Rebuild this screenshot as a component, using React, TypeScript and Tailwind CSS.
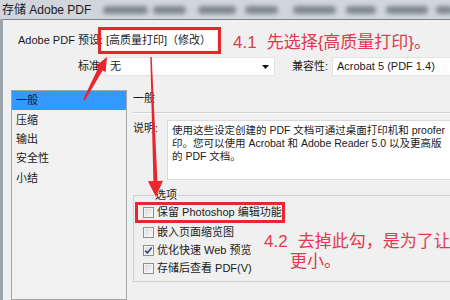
const blobs = [
  "ml-[12px] w-[45px]",
  "ml-[5px] w-[33px]",
  "ml-[12px] w-[38px]",
  "ml-[9px] w-[33px]",
  "ml-[15px] w-[43px]",
  "ml-[10px] w-[30px]",
  "ml-[10px] w-[42px]",
  "ml-[8px] w-[17px]"
];

const pages = ["一般", "压缩", "输出", "安全性", "小结"];

function Checkbox({ checked = false }: { checked?: boolean }) {
  return (
    <span className="flex h-[11px] w-[11px] shrink-0 items-center justify-center border border-[#8e8f8f] bg-gradient-to-br from-[#d9d9d9] to-[#fafafa] shadow-[inset_0_0_0_1px_#f4f4f4]">
      {checked && (
        <svg width="9" height="9" viewBox="0 0 9 9">
          <path d="M1.2 4.6 L3.4 7 L7.8 1.6" fill="none" stroke="#2f4a78" strokeWidth="1.6" />
        </svg>
      )}
    </span>
  );
}

function Option({ label, checked }: { label: string; checked?: boolean }) {
  return (
    <div className="flex h-[18px] items-center gap-[3px] pl-[9px]">
      <Checkbox checked={checked} />
      <span className="whitespace-nowrap">{label}</span>
    </div>
  );
}

function Arrows() {
  return (
    <svg className="pointer-events-none absolute inset-0" width="450" height="300" viewBox="0 0 450 300">
      <polygon
        fill="#e8262e"
        points="83.1,99.5 98.2,68.1 95.1,66.5 107,57 105.7,72.1 102.6,70.5 84.9,100.5"
      />
      <polygon
        fill="#e8262e"
        points="150.3,57 153.4,181 147.9,181.3 156,197 162.9,180.7 157.4,181 151.7,57"
      />
    </svg>
  );
}

export default function App() {
  return (
    <div className="relative h-[300px] w-[450px] overflow-hidden bg-gradient-to-b from-[#d0d6dc] to-[#bec5cc] font-['Liberation_Sans','Noto_Sans_CJK_SC',sans-serif] text-[11px] text-[#1a1a1a]">
      <div className="flex h-[19px] items-center">
        <span className="whitespace-nowrap pl-[2px] text-[12px] text-[#1b1b1b]">存储 Adobe PDF</span>
        {blobs.map((b, i) => (
          <span key={i} className={`h-[8px] shrink-0 rounded-full bg-[#6c757e] opacity-80 blur-[2px] ${b}`} />
        ))}
      </div>

      <div className="flex h-[281px]">
        <div className="w-[3px] shrink-0 bg-[#9ca3aa]" />
        <div className="flex flex-1 flex-col border-t border-[#7b848d] bg-[#f0f0f0]">
          {/* preset row */}
          <div className="flex items-center pt-[7px]">
            <span className="w-[95px] shrink-0 whitespace-nowrap pl-[15px]">Adobe PDF 预设:</span>
            <div className="h-[27px] w-[123px] shrink-0 border-[3px] border-[#e8262e] p-[1px]">
              <div className="flex h-full items-center bg-white pl-[4px] whitespace-nowrap">[高质量打印]（修改）</div>
            </div>
            <span className="ml-[12px] mt-[4px] flex whitespace-nowrap text-[17px] leading-none text-[#e3394e]">
              <span>4.1</span>
              <span className="ml-[10px]">先选择{"{"}高质量打印{"}"}。</span>
            </span>
          </div>

          {/* standard row */}
          <div className="mt-[3px] flex h-[19px] items-center">
            <span className="w-[102px] shrink-0 pr-[2px] text-right">标准:</span>
            <div className="flex h-full w-[170px] shrink-0 items-center justify-between border border-[#e2e2e2] bg-white pl-[4px] pr-[5px]">
              <span>无</span>
              <svg width="7" height="4" viewBox="0 0 7 4">
                <polygon points="0,0 7,0 3.5,4" fill="#111" />
              </svg>
            </div>
            <span className="ml-[17px] w-[40px] shrink-0 whitespace-nowrap">兼容性:</span>
            <div className="flex h-full w-[140px] shrink-0 items-center border border-[#e2e2e2] bg-white pl-[4px] whitespace-nowrap">
              Acrobat 5 (PDF 1.4)
            </div>
          </div>

          {/* body */}
          <div className="mt-[14px] flex flex-1 overflow-hidden">
            <div className="ml-[8px] w-[116px] shrink-0 border border-[#a5a5a5] bg-[#f1f1f1]">
              {pages.map((p, i) => (
                <div
                  key={p}
                  className={`flex h-[19.3px] items-center pl-[4px] ${i === 0 ? "bg-[#3399ff]" : ""}`}
                >
                  {p}
                </div>
              ))}
            </div>

            <div className="ml-[6px] flex flex-1 flex-col">
              <div className="h-[16px] leading-[16px]">一般</div>
              <div className="mt-[6px] h-[2px] border-t border-b border-t-[#cfcfcf] border-b-white" />

              <div className="mt-[6px] flex">
                <span className="w-[34px] shrink-0 pt-[2px] leading-[13px]">说明:</span>
                <div className="h-[60px] w-[300px] shrink-0 border border-[#dadada] bg-white pl-[4px] pt-[3px] text-[10.5px] leading-[13px]">
                  <div className="whitespace-nowrap">使用这些设定创建的 PDF 文档可通过桌面打印机和 proofer</div>
                  <div className="whitespace-nowrap">印。您可以使用 Acrobat 和 Adobe Reader 5.0 以及更高版</div>
                  <div className="whitespace-nowrap">的 PDF 文档。</div>
                </div>
              </div>

              <fieldset className="mt-[8px] w-[330px] shrink-0 border border-[#d0d0d0] pb-[4px]">
                <legend className="ml-[20px] px-[1px] leading-[14px]">选项</legend>
                <div className="ml-[1px] flex h-[21px] w-[150px] items-center gap-[3px] border-[3px] border-[#e8262e] pl-[5px]">
                  <Checkbox />
                  <span className="whitespace-nowrap">保留 Photoshop 编辑功能</span>
                </div>
                <Option label="嵌入页面缩览图" />
                <Option label="优化快速 Web 预览" checked />
                <Option label="存储后查看 PDF(V)" />
              </fieldset>
            </div>
          </div>
        </div>
      </div>

      {/* annotation over the options box */}
      <div className="absolute left-[264px] top-[232px] text-[17px] leading-[20px] text-[#e3394e]">
        <div className="flex whitespace-nowrap">
          <span>4.2</span>
          <span className="ml-[10px]">去掉此勾，是为了让</span>
        </div>
        <div className="whitespace-nowrap pl-[26px]">更小。</div>
      </div>

      <Arrows />
    </div>
  );
}
